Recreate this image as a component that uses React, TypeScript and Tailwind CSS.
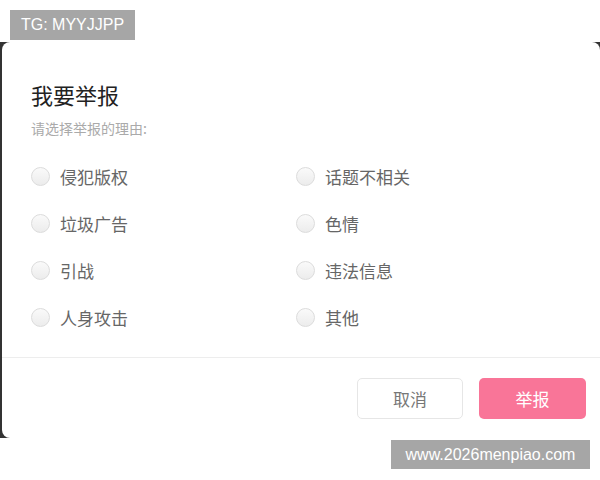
import { Fragment } from 'react';

const reasons = [
  ['侵犯版权', '话题不相关'],
  ['垃圾广告', '色情'],
  ['引战', '违法信息'],
  ['人身攻击', '其他'],
];

function Radio({ label }: { label: string }) {
  return (
    <label className="flex items-center h-[47px] cursor-pointer">
      <span className="w-[19px] h-[19px] rounded-full border border-[#dcdcdc] bg-gradient-to-b from-[#fafafa] to-[#ececec] shrink-0" />
      <span className="ml-[10px] text-[17px] text-[#666]">{label}</span>
    </label>
  );
}

export default function App() {
  return (
    <div
      className="relative w-[600px] h-[480px] bg-white overflow-hidden"
      style={{ fontFamily: '"Noto Sans CJK SC", "Noto Sans", sans-serif' }}
    >
      <div className="absolute left-[10px] top-[10px] w-[125px] h-[30px] bg-[#a6a6a6] text-white text-[16px] flex items-center justify-center z-10" style={{ fontFamily: '"Liberation Sans", Arial, sans-serif' }}>
        TG: MYYJJPP
      </div>

      <div className="mt-[42px] h-[396px] bg-[#333] pl-[2px]">
        <div className="h-full bg-white rounded-l-[8px] rounded-tr-[8px] flex flex-col">
          <div className="pl-[29px] pt-[37px]">
            <h1 className="text-[22px] leading-[30px] text-[#222]">我要举报</h1>
            <p className="mt-[9px] text-[14px] leading-[20px] text-[#aaa]">请选择举报的理由:</p>
            <div className="mt-[15px] grid grid-cols-[265px_1fr]">
              {reasons.map(([a, b]) => (
                <Fragment key={a}>
                  <Radio label={a} />
                  <Radio label={b} />
                </Fragment>
              ))}
            </div>
          </div>
          <div className="mt-[16px] border-t border-[#ededed] flex justify-end gap-[16px] pt-[20px] pr-[14px]">
            <button className="w-[106px] h-[41px] rounded-[5px] border border-[#e6e6e6] bg-white text-[17px] text-[#777]">
              取消
            </button>
            <button className="w-[107px] h-[41px] rounded-[5px] bg-[#f97598] text-[17px] text-white">
              举报
            </button>
          </div>
        </div>
      </div>

      <div className="absolute left-[391px] top-[440px] w-[199px] h-[29px] bg-[#a6a6a6] text-white text-[16px] flex items-center justify-center" style={{ fontFamily: '"Liberation Sans", Arial, sans-serif' }}>
        www.2026menpiao.com
      </div>
    </div>
  );
}
